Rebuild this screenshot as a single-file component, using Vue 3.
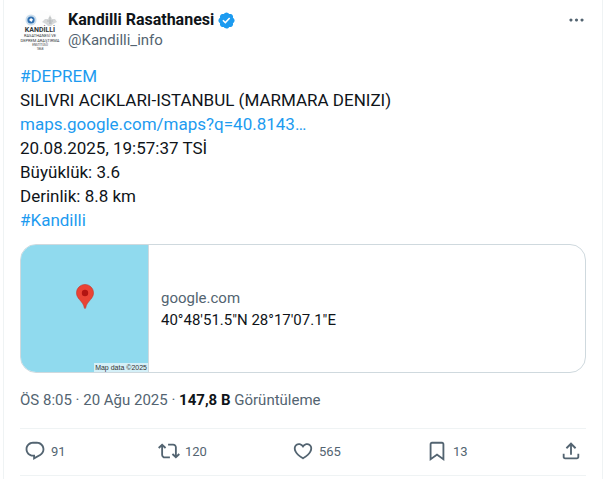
<template>
  <article class="tweet">
    <header class="tweet-header">
      <a class="avatar" href="#" aria-label="Kandilli Rasathanesi">
        <svg viewBox="0 0 40 40" width="40" height="40">
          <circle cx="20" cy="20" r="20" fill="#fdfdfd" />
          <circle cx="11" cy="10" r="5.5" fill="#c9dcec" />
          <circle cx="11" cy="10" r="3.6" fill="#2f6fb0" />
          <path d="M9 10l2-2 2 1.500-1.500 2.500z" fill="#fff" />
          <path d="M22 12l3-3h3l2-4 2 4h3l2 3-4 2-2 2h-3l-2-2z" fill="#d5d7d8" />
          <path d="M27 11h6M29 13h3M30 7v7" stroke="#a9adaf" stroke-width="0.700" />
          <g text-anchor="middle" fill="#33373a">
            <text x="20" y="22" class="logo-name">KANDİLLİ</text>
            <text x="20" y="27" class="logo-line">RASATHANESİ VE</text>
            <text x="20" y="32" class="logo-line">DEPREM ARAŞTIRMA</text>
            <text x="20" y="36" class="logo-small">ENSTİTÜSÜ</text>
            <text x="20" y="40" class="logo-small">1868</text>
          </g>
        </svg>
      </a>
      <div class="author">
        <div class="author-name">
          <a href="#">Kandilli Rasathanesi</a>
          <svg class="verified" viewBox="0 0 22 22" aria-hidden="true"><path :d="icons.verified" /></svg>
        </div>
        <a class="author-handle" href="#">@Kandilli_info</a>
      </div>
      <button class="more" type="button" aria-label="Daha fazla">
        <svg viewBox="0 0 24 24"><path :d="icons.more" /></svg>
      </button>
    </header>

    <div class="tweet-text">
      <p v-for="line in lines" :key="line.text">
        <a v-if="line.link" href="#">{{ line.text }}</a>
        <template v-else>{{ line.text }}</template>
      </p>
    </div>

    <a class="card" href="#">
      <div class="card-map">
        <svg class="pin" viewBox="0 0 18 25" aria-hidden="true">
          <path
            d="M9 .5C4.300.5.5 4.200.5 8.900c0 2.700 1.300 4.600 3 6.700 2.200 2.700 4.200 4.600 4.800 8.100.1.500.3.800.7.800s.6-.3.7-.8c.6-3.500 2.600-5.400 4.800-8.100 1.700-2.100 3-4 3-6.700C17.500 4.200 13.700.5 9 .5z"
            fill="#ea4335"
            stroke="#c5372c"
            stroke-width="0.600"
          />
          <circle cx="9" cy="9" r="3.200" fill="#b31412" />
        </svg>
        <span class="map-credit">Map data ©2025</span>
      </div>
      <div class="card-body">
        <span class="card-domain">google.com</span>
        <span class="card-title">40°48'51.5"N 28°17'07.1"E</span>
      </div>
    </a>

    <div class="meta">
      <a href="#">ÖS 8:05 · 20 Ağu 2025</a>
      <span> · </span>
      <a href="#"><strong>147,8 B</strong> Görüntüleme</a>
    </div>

    <div class="actions">
      <button v-for="action in actions" :key="action.icon" type="button" :aria-label="action.label">
        <svg viewBox="0 0 24 24"><path :d="icons[action.icon]" /></svg>
        <span v-if="action.count">{{ action.count }}</span>
      </button>
    </div>
  </article>
</template>

<script setup>
const lines = [
  { text: '#DEPREM', link: true },
  { text: 'SILIVRI ACIKLARI-ISTANBUL (MARMARA DENIZI)' },
  { text: 'maps.google.com/maps?q=40.8143…', link: true },
  { text: '20.08.2025, 19:57:37 TSİ' },
  { text: 'Büyüklük: 3.6' },
  { text: 'Derinlik: 8.8 km' },
  { text: '#Kandilli', link: true },
]

const actions = [
  { icon: 'reply', label: 'Yanıtla', count: 91 },
  { icon: 'repost', label: 'Yeniden gönder', count: 120 },
  { icon: 'like', label: 'Beğen', count: 565 },
  { icon: 'bookmark', label: 'Yer işareti', count: 13 },
  { icon: 'share', label: 'Paylaş' },
]

const icons = {
  verified:
    'M20.396 11c-.018-.646-.215-1.275-.57-1.816-.354-.54-.852-.972-1.438-1.246.223-.607.27-1.264.14-1.897-.131-.634-.437-1.218-.882-1.687-.47-.445-1.053-.75-1.687-.882-.633-.13-1.29-.083-1.897.14-.273-.587-.704-1.086-1.245-1.44S11.647 1.62 11 1.604c-.646.017-1.273.213-1.813.568s-.969.854-1.24 1.44c-.608-.223-1.267-.272-1.902-.14-.635.13-1.22.436-1.69.882-.445.47-.749 1.055-.878 1.688-.13.633-.08 1.29.144 1.896-.587.274-1.087.705-1.443 1.245-.356.54-.555 1.17-.574 1.817.02.647.218 1.276.574 1.817.356.54.856.972 1.443 1.245-.224.606-.274 1.263-.144 1.896.13.634.433 1.218.877 1.688.47.443 1.054.747 1.687.878.633.132 1.29.084 1.897-.136.274.586.705 1.084 1.246 1.439.54.354 1.17.551 1.816.569.647-.016 1.276-.213 1.817-.567s.972-.854 1.245-1.44c.604.239 1.266.296 1.903.164.636-.132 1.22-.447 1.68-.907.46-.46.776-1.044.908-1.681s.075-1.299-.165-1.903c.586-.274 1.084-.705 1.439-1.246.354-.54.551-1.17.569-1.816zM9.662 14.85l-3.429-3.428 1.293-1.302 2.072 2.072 4.4-4.794 1.347 1.246z',
  more: 'M3 12c0-1.1.9-2 2-2s2 .9 2 2-.9 2-2 2-2-.9-2-2zm9 2c1.1 0 2-.9 2-2s-.9-2-2-2-2 .9-2 2 .9 2 2 2zm7 0c1.1 0 2-.9 2-2s-.9-2-2-2-2 .9-2 2 .9 2 2 2z',
  reply:
    'M1.751 10c0-4.42 3.584-8 8.005-8h4.366c4.49 0 8.129 3.64 8.129 8.13 0 2.96-1.607 5.68-4.196 7.11l-8.054 4.46v-3.69h-.067c-4.49.1-8.183-3.51-8.183-8.01zm8.005-6c-3.317 0-6.005 2.69-6.005 6 0 3.37 2.77 6.08 6.138 6.01l.351-.01h1.761v2.3l5.087-2.81c1.951-1.08 3.163-3.13 3.163-5.36 0-3.39-2.744-6.13-6.129-6.13H9.756z',
  repost:
    'M4.5 3.88l4.432 4.14-1.364 1.46L5.5 7.55V16c0 1.1.896 2 2 2H13v2H7.5c-2.209 0-4-1.79-4-4V7.55L1.432 9.48.068 8.02 4.5 3.88zM16.5 6H11V4h5.5c2.209 0 4 1.79 4 4v8.45l2.068-1.93 1.364 1.46-4.432 4.14-4.432-4.14 1.364-1.46 2.068 1.93V8c0-1.1-.896-2-2-2z',
  like: 'M16.697 5.5c-1.222-.06-2.679.51-3.89 2.16l-.805 1.09-.806-1.09C9.984 6.01 8.526 5.44 7.304 5.5c-1.243.07-2.349.78-2.91 1.91-.552 1.12-.633 2.78.479 4.82 1.074 1.97 3.257 4.27 7.129 6.61 3.87-2.34 6.052-4.64 7.126-6.61 1.111-2.04 1.03-3.7.477-4.82-.561-1.13-1.666-1.84-2.908-1.91zm4.187 7.69c-1.351 2.48-4.001 5.12-8.379 7.67l-.503.3-.504-.3c-4.379-2.55-7.029-5.19-8.382-7.67-1.36-2.5-1.41-4.86-.514-6.67.887-1.79 2.647-2.91 4.601-3.01 1.651-.09 3.368.56 4.798 2.01 1.429-1.45 3.146-2.1 4.796-2.01 1.954.1 3.714 1.22 4.601 3.01.896 1.81.846 4.17-.514 6.67z',
  bookmark:
    'M4 4.5C4 3.12 5.119 2 6.5 2h11C18.881 2 20 3.12 20 4.5v18.44l-8-5.71-8 5.71V4.5zM6.5 4c-.276 0-.5.22-.5.5v14.56l6-4.29 6 4.29V4.5c0-.28-.224-.5-.5-.5h-11z',
  share:
    'M12 2.59l5.7 5.7-1.41 1.42L13 6.41V16h-2V6.41l-3.3 3.3-1.41-1.42L12 2.59zM21 15l-.02 3.51c0 1.38-1.12 2.49-2.5 2.49H5.5C4.11 21 3 19.88 3 18.5V15h2v3.5c0 .28.22.5.5.5h12.98c.28 0 .5-.22.5-.5L19 15h2z',
}
</script>

<style>
body {
  background: #fff;
}
</style>

<style scoped>
.tweet {
  box-sizing: border-box;
  min-height: 100vh;
  margin-left: 3px;
  padding: 10px 16px 0;
  border: solid #eff3f4;
  border-width: 0 1px;
  color: #0f1419;
  font-family: Roboto, 'Liberation Sans', sans-serif;
  font-size: 15px;
  line-height: 20px;
}

a {
  color: inherit;
  text-decoration: none;
}

button {
  padding: 0;
  border: 0;
  background: none;
  color: #536471;
  font: inherit;
  cursor: pointer;
}

svg {
  display: block;
  fill: currentColor;
}

.tweet-header {
  display: flex;
  align-items: flex-start;
  gap: 8px;
}

.logo-name {
  font-size: 7px;
  font-weight: 700;
}

.logo-line {
  font-size: 4px;
}

.logo-small {
  font-size: 3px;
}

.author {
  flex: 1;
}

.author-name {
  display: flex;
  align-items: center;
  gap: 3px;
  font-size: 16px;
  font-weight: 700;
}

.verified {
  width: 19px;
  height: 19px;
  color: #1d9bf0;
}

.author-handle {
  color: #536471;
}

.more svg {
  width: 19px;
  height: 20px;
}

.tweet-text {
  margin-top: 14px;
  font-size: 17px;
  line-height: 24px;
}

.tweet-text p {
  margin: 0;
}

.tweet-text a {
  color: #1d9bf0;
}

.card {
  display: flex;
  margin-top: 12px;
  overflow: hidden;
  border: 1px solid #cfd9de;
  border-radius: 16px;
}

.card-map {
  position: relative;
  display: flex;
  align-items: center;
  justify-content: center;
  width: 127px;
  height: 127px;
  border-right: 1px solid #cfd9de;
  background: #90daee;
}

.pin {
  width: 18px;
  height: 25px;
  margin-bottom: 24px;
}

.map-credit {
  position: absolute;
  right: 0;
  bottom: 0;
  padding: 0 1px;
  background: #d5f0f8;
  color: #333;
  font-family: 'Liberation Sans', Arial, sans-serif;
  font-size: 7px;
  line-height: 9px;
}

.card-body {
  display: flex;
  flex: 1;
  flex-direction: column;
  justify-content: center;
  gap: 2px;
  padding: 0 12px;
}

.card-domain {
  color: #536471;
}

.meta {
  margin-top: 17px;
  color: #536471;
}

.meta strong {
  color: #0f1419;
}

.actions {
  display: grid;
  grid-template-columns: repeat(4, 1fr) auto;
  align-items: center;
  height: 44px;
  margin-top: 18px;
  padding: 0 4px 2px;
  border: solid #eff3f4;
  border-width: 1px 0;
}

.actions button {
  display: flex;
  align-items: center;
  gap: 5px;
  font-size: 13px;
}

.actions span {
  padding-top: 2px;
}

.actions svg {
  width: 22px;
  height: 22px;
}
</style>
